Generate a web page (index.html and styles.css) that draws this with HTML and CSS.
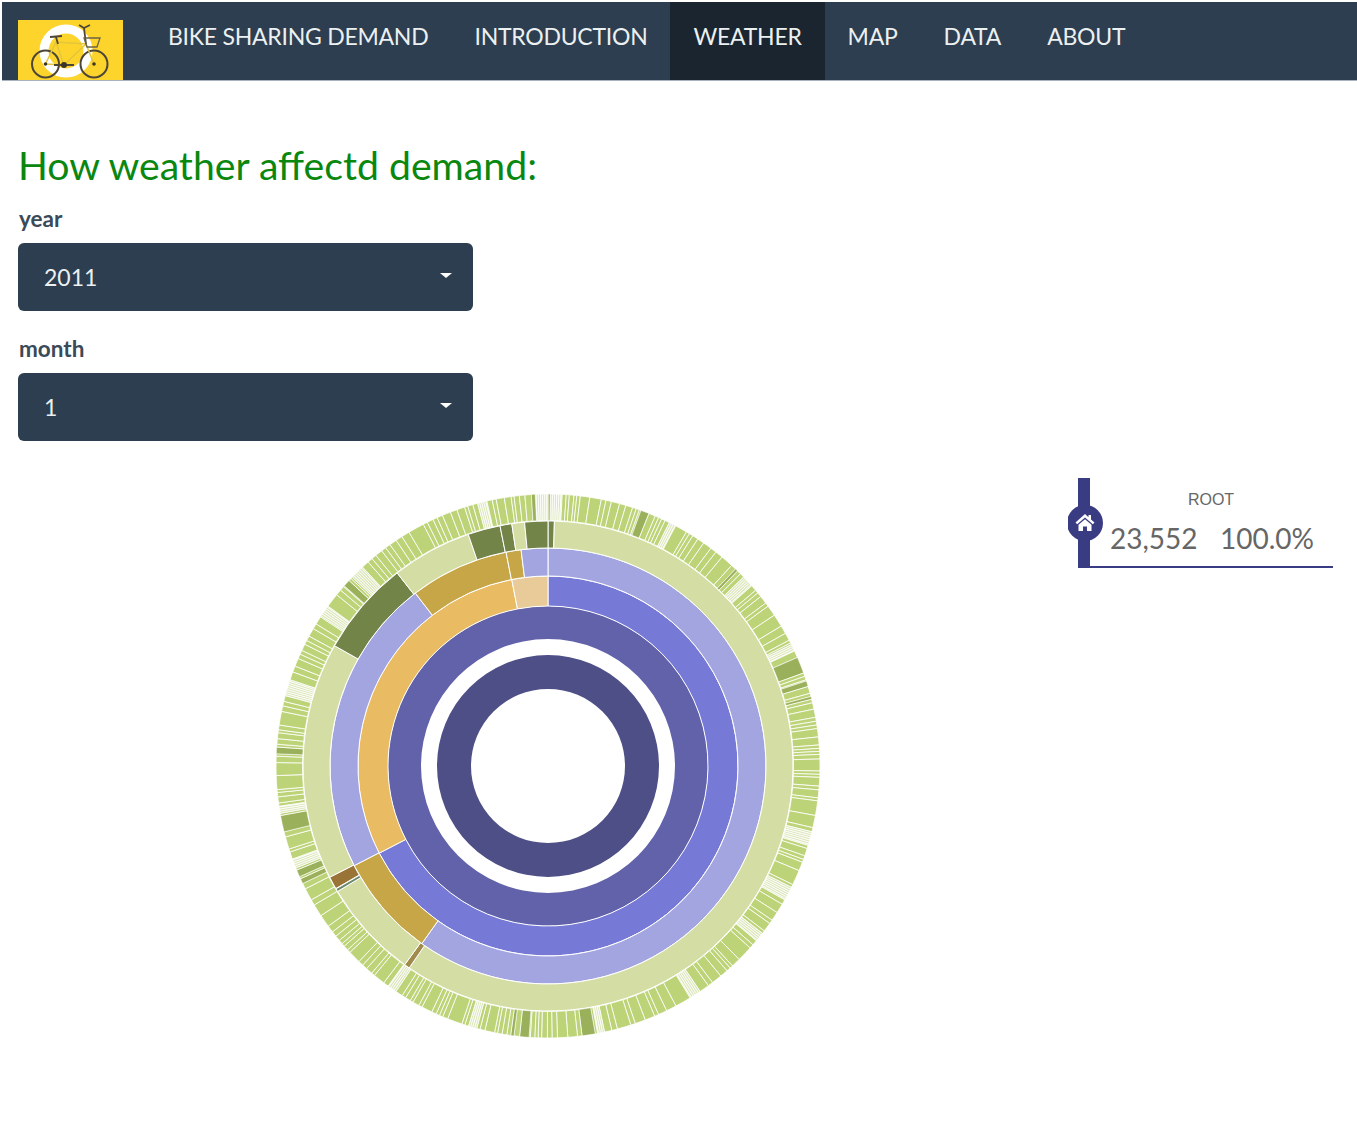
FILE: index.html
```html
<!DOCTYPE html>
<html lang="en">
<head>
  <meta charset="UTF-8">
  <title>Bike Sharing Demand</title>
  <link rel="stylesheet" href="styles.css">
</head>
<body>
  <nav class="navbar">
    <div class="logo">
      <svg width="105" height="60" viewBox="0 0 105 60">
        <rect class="logo-bg" width="105" height="60"/>
        <circle class="logo-ring" cx="48" cy="31" r="22"/>
        <g class="bike-wheels">
          <circle cx="27.5" cy="44" r="13.5"/>
          <circle cx="76" cy="44" r="13.5"/>
        </g>
        <path class="bike-frame" d="M27.500 44L38 22L68 24L76 44M38 22L46 45L68 24M27.500 44L46 45"/>
        <path class="bike-dark" d="M32 17L44 16M38 17L40 24M68 24L66 8L61 5M66 8L72 5M36 45L56 45"/>
        <path class="bike-basket" d="M66 18L82 18L79 27L69 27Z"/>
        <circle class="bike-hub" cx="46" cy="45" r="3"/>
        <circle class="bike-hub" cx="27.500" cy="44" r="1.800"/>
        <circle class="bike-hub" cx="76" cy="44" r="1.800"/>
      </svg>
    </div>
    <ul class="nav-links">
      <li><a href="#">BIKE SHARING DEMAND</a></li>
      <li><a href="#">INTRODUCTION</a></li>
      <li class="active"><a href="#">WEATHER</a></li>
      <li><a href="#">MAP</a></li>
      <li><a href="#">DATA</a></li>
      <li><a href="#">ABOUT</a></li>
    </ul>
  </nav>

  <main class="content">
    <h2 class="title">How weather affectd demand:</h2>

    <label class="field-label">year</label>
    <div class="picker"><span>2011</span><i class="caret"></i></div>

    <label class="field-label">month</label>
    <div class="picker"><span>1</span><i class="caret"></i></div>
  </main>

  <section class="chart-row">
    <svg id="sunburst" class="sunburst" width="560" height="560" viewBox="-280 -280 560 560"></svg>

    <svg class="trail" width="270" height="92" viewBox="0 0 270 92">
      <rect class="trail-bar" x="10" y="0" width="12" height="90"/>
      <rect class="trail-bar" x="10" y="88" width="255" height="2"/>
      <circle class="trail-bar" cx="17" cy="45" r="18"/>
      <path class="trail-home" d="M17 36L7.500 44.500L9.200 46.200L17 39.400L24.800 46.200L26.500 44.500L23 41.400L23 37L20.500 37L20.500 39.200ZM10.500 46.800L10.500 53L15 53L15 48.500L19 48.500L19 53L23.500 53L23.500 46.800L17 41.200Z"/>
      <text class="trail-name" x="143" y="27">ROOT</text>
      <text class="trail-value" x="42" y="71">23,552</text>
      <text class="trail-value" x="152" y="71">100.0%</text>
    </svg>
  </section>

  <script src="chart.js"></script>
</body>
</html>
```

FILE: styles.css
```css
* {
  box-sizing: border-box;
}

body {
  margin: 2px 0 0 2px;
  font-family: Lato, "Open Sans", sans-serif;
  background-color: #fff;
  color: #2c3e50;
}

.navbar {
  display: flex;
  height: 79px;
  background-color: #2c3e50;
  border-bottom: 1px solid #a9b3bf;
}

.logo {
  margin: 18px 22px 0 16px;
  height: 60px;
}

.logo svg {
  display: block;
}

.logo-bg { fill: #fdd42c; }
.logo-ring { fill: none; stroke: #fff; stroke-width: 9; }
.bike-wheels circle { fill: none; stroke: #4d4638; stroke-width: 2; }
.bike-frame { fill: none; stroke: #e3c63a; stroke-width: 1.500; }
.bike-dark { fill: none; stroke: #4d4638; stroke-width: 1.800; }
.bike-basket { fill: none; stroke: #6b6242; stroke-width: 1.300; }
.bike-hub { fill: #3b3527; }

.nav-links {
  display: flex;
  list-style: none;
  margin: 0;
  padding: 0;
}

.nav-links a {
  display: block;
  height: 78px;
  padding: 20px 23px 0;
  font-size: 23px;
  line-height: 29px;
  letter-spacing: -0.25px;
  color: #ecf0f1;
  text-decoration: none;
}

.nav-links .active a {
  background-color: #1a252f;
}

.content {
  padding: 0 0 0 16px;
}

.title {
  margin: 58px 0 0;
  font-size: 39.200px;
  line-height: 52px;
  font-weight: 400;
  color: #0a870f;
}

.field-label {
  display: block;
  margin: 15px 0 11px 1px;
  font-size: 22.500px;
  line-height: 26px;
  font-weight: 700;
  color: #3b4a58;
}

.picker {
  display: flex;
  align-items: center;
  justify-content: space-between;
  width: 455px;
  height: 68px;
  margin-bottom: 25px;
  padding: 0 21px 0 26px;
  border-radius: 6px;
  background-color: #2c3e50;
  color: #ecf0f1;
  font-size: 23px;
}

.caret {
  width: 0;
  height: 0;
  margin-top: -3px;
  border-left: 6px solid transparent;
  border-right: 6px solid transparent;
  border-top: 5px solid #fff;
}

.chart-row {
  display: flex;
  align-items: flex-start;
  margin-top: -33px;
}

.sunburst {
  display: block;
  flex: none;
  margin: 53px 0 0 266px;
}

.trail {
  display: block;
  flex: none;
  margin: 45px 0 0 240px;
}

.arc { stroke: #fff; stroke-width: 1; }
.core { fill: #4e4f87; }
.season { fill: #6262ab; }
.blue { fill: #7679d6; }
.orange { fill: #e9bb62; }
.sand { fill: #e8cb98; }
.lilac { fill: #a3a5e0; }
.gold { fill: #c7a648; }
.sage { fill: #d4dea4; }
.olive { fill: #728447; }
.brown { fill: #9a7437; }
.slate { fill: #6f8a6a; }
.khaki { fill: #a08a4c; }
.leaf { fill: #bdd377; stroke: #fff; stroke-width: 0.8; }
.pale { fill: #dde7bd; stroke: #fff; stroke-width: 0.8; }
.moss { fill: #9ab05a; stroke: #fff; stroke-width: 0.5; }

.trail-bar { fill: #3a3c83; }
.trail-home { fill: #fff; }

.trail-name {
  font-family: "Liberation Sans", Arial, sans-serif;
  font-size: 16px;
  text-anchor: middle;
  fill: #666;
}

.trail-value {
  font-size: 28px;
  fill: #666;
}
```

FILE: chart.js
```js
var svg = document.getElementById('sunburst');

function point(r, deg) {
  var a = deg * Math.PI / 180;
  return (r * Math.sin(a)).toFixed(2) + ' ' + (-r * Math.cos(a)).toFixed(2);
}

function addArc(inner, outer, from, to, cls) {
  var el = document.createElementNS('http://www.w3.org/2000/svg', 'path');
  var large = to - from > 180 ? 1 : 0;
  var d;
  if (to - from >= 360) {
    d = 'M' + point(outer, 0) + 'A' + outer + ' ' + outer + ' 0 1 1 ' + point(outer, 180) +
        'A' + outer + ' ' + outer + ' 0 1 1 ' + point(outer, 360) + 'Z' +
        'M' + point(inner, 0) + 'A' + inner + ' ' + inner + ' 0 1 0 ' + point(inner, 180) +
        'A' + inner + ' ' + inner + ' 0 1 0 ' + point(inner, 360) + 'Z';
  } else {
    d = 'M' + point(outer, from) + 'A' + outer + ' ' + outer + ' 0 ' + large + ' 1 ' + point(outer, to) +
        'L' + point(inner, to) + 'A' + inner + ' ' + inner + ' 0 ' + large + ' 0 ' + point(inner, from) + 'Z';
  }
  el.setAttribute('d', d);
  el.setAttribute('class', cls);
  svg.appendChild(el);
}

// inner rings: [from, to, colour]
addArc(77, 111, 0, 360, 'core');
addArc(127, 160, 0, 360, 'season');

var rings = [
  { inner: 160, outer: 190, parts: [[0, 242.7, 'blue'], [242.7, 349, 'orange'], [349, 360, 'sand']] },
  { inner: 190, outer: 218, parts: [[0, 215.4, 'lilac'], [215.4, 242.8, 'gold'], [242.8, 322.5, 'lilac'],
    [322.5, 348.9, 'gold'], [348.9, 352.9, 'gold'], [352.9, 360, 'lilac']] },
  { inner: 218, outer: 245, parts: [[0, 1.5, 'olive'], [1.5, 214.5, 'sage'], [214.5, 215.8, 'khaki'],
    [215.8, 239.2, 'sage'], [239.2, 239.9, 'slate'], [240, 243, 'brown'], [243, 299.4, 'sage'],
    [299.4, 322, 'olive'], [322, 341, 'sage'], [341, 348.7, 'olive'], [348.7, 351.5, 'olive'],
    [351.5, 354.5, 'sage'], [354.5, 360, 'olive']] }
];

rings.forEach(function (ring) {
  ring.parts.forEach(function (p) {
    addArc(ring.inner, ring.outer, p[0], p[1], 'arc ' + p[2]);
  });
});

// outer ring, lots of thin days
var special = [
  [20, 21.8, 'moss'], [26.5, 28, 'pale'], [43.6, 44.2, 'moss'], [46, 48.5, 'pale'], [63.5, 65, 'pale'],
  [66.5, 70, 'moss'], [71.8, 73, 'moss'], [75.2, 75.8, 'moss'], [104, 107, 'pale'], [116.5, 119.5, 'pale'],
  [128, 130, 'pale'], [146, 148.5, 'pale'], [168, 169.5, 'pale'], [170, 172.8, 'moss'], [184, 186, 'moss'],
  [187.2, 187.9, 'moss'], [195.2, 197, 'pale'], [214, 216, 'pale'], [244.4, 245.5, 'moss'], [246, 247.5, 'moss'],
  [248, 250, 'pale'], [256, 259.5, 'moss'], [260, 261.5, 'pale'], [272.6, 274, 'moss'], [285, 288.5, 'pale'],
  [303.5, 306, 'pale'], [311.5, 313, 'moss'], [314, 317, 'pale'], [345, 347, 'pale'], [356.5, 357.3, 'moss'],
  [357.5, 360, 'pale'], [0, 0.5, 'moss'], [0.5, 3, 'pale']
];
special.sort(function (a, b) { return a[0] - b[0]; });

var seed = 41;
function rnd() {
  seed = (seed * 1103 + 12345) % 65536;
  return seed / 65536;
}

function stripeWidth() {
  return 0.6 + rnd() * rnd() * 3.4;
}

var at = 0;
special.forEach(function (s) {
  while (at < s[0] - 0.2) {
    var w = Math.min(stripeWidth(), s[0] - at);
    addArc(245.5, 272, at, at + w, 'leaf');
    at += w;
  }
  if (s[2] === 'pale') {
    // the washed out bits are very thin slices
    for (var a = s[0]; a < s[1]; a += 0.45) {
      addArc(245.5, 272, a, Math.min(a + 0.45, s[1]), 'pale');
    }
  } else {
    addArc(245.5, 272, s[0], s[1], s[2]);
  }
  at = s[1];
});
```
